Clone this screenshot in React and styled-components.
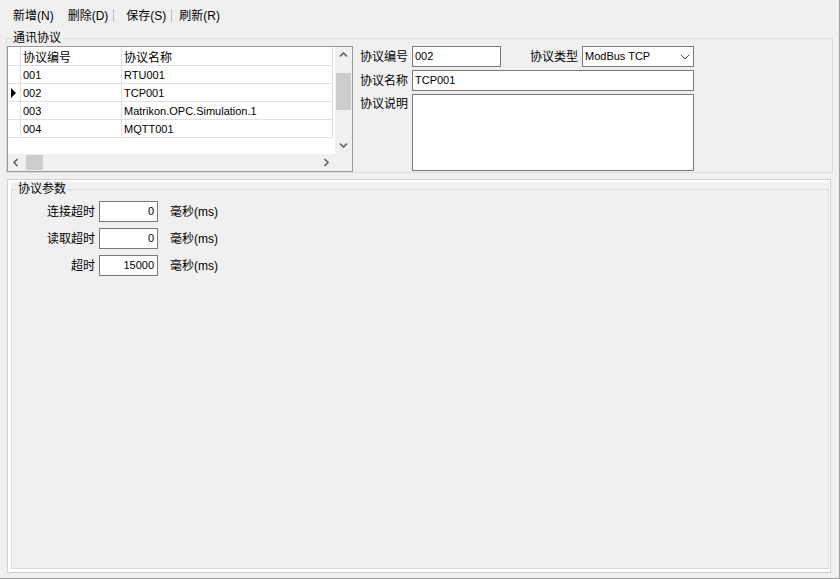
import React from 'react';
import styled, { createGlobalStyle } from 'styled-components';

const GlobalStyle = createGlobalStyle`
  html, body {
    margin: 0;
    padding: 0;
    background: #f0f0f0;
  }
  body {
    font-family: "Liberation Sans", "Noto Sans CJK SC", sans-serif;
    font-size: 12px;
    color: #000;
  }
`;

const Window = styled.div`
  box-sizing: border-box;
  width: 840px;
  height: 579px;
  background: #f0f0f0;
  border-right: 1px solid #a0a0a0;
  border-bottom: 1px solid #a0a0a0;
  overflow: hidden;
`;

const Toolbar = styled.div`
  display: flex;
  align-items: center;
  height: 31px;
  padding-left: 6px;
`;

const ToolButton = styled.div`
  padding: 0 7px;
  line-height: 16px;
  white-space: nowrap;
`;

const ToolSep = styled.div`
  width: 1px;
  height: 13px;
  background: #bcbcbc;
  margin: 0 ${(p) => p.$after || 0}px 0 -2px;
`;

const Group = styled.div`
  position: relative;
  box-sizing: border-box;
  border: 1px solid #dcdcdc;
`;

const Legend = styled.span`
  position: absolute;
  top: -9px;
  left: 5px;
  padding: 0 1px;
  background: #f0f0f0;
  line-height: 16px;
  white-space: nowrap;
`;

const TopGroup = styled(Group)`
  display: flex;
  align-items: flex-start;
  width: 827px;
  height: 135px;
  margin: 7px 0 0 6px;
  padding-top: 7px;
`;

const Grid = styled.div`
  box-sizing: border-box;
  width: 346px;
  height: 126px;
  border: 1px solid #999;
  background: #fff;
  display: flex;
  flex-direction: column;
`;

const GridBody = styled.div`
  display: flex;
  height: 107px;
`;

const Cells = styled.div`
  flex: 1;
  background: #fff;
`;

const Row = styled.div`
  display: grid;
  grid-template-columns: 13px 101px 211px;
  height: ${(p) => p.$h}px;
`;

const Cell = styled.div`
  box-sizing: border-box;
  display: flex;
  align-items: center;
  padding-left: 2px;
  border-right: 1px solid #e0e0e0;
  border-bottom: 1px solid #e0e0e0;
  font-size: ${(p) => (p.$head ? 12 : 11)}px;
  white-space: nowrap;
  overflow: hidden;
`;

const RowHead = styled(Cell)`
  padding-left: 3px;
`;

const Pointer = styled.span`
  width: 0;
  height: 0;
  border-left: 5px solid #000;
  border-top: 5px solid transparent;
  border-bottom: 5px solid transparent;
`;

const VScroll = styled.div`
  width: 17px;
  background: #f0f0f0;
  display: flex;
  flex-direction: column;
`;

const HScroll = styled.div`
  display: flex;
  height: 17px;
  background: #f0f0f0;
`;

const ArrowBox = styled.div`
  width: 17px;
  height: 17px;
  flex: none;
  display: flex;
  align-items: center;
  justify-content: center;
`;

const VThumb = styled.div`
  margin: 9px 1px 0;
  height: 37px;
  background: #cdcdcd;
`;

const HThumb = styled.div`
  margin: 1px 0 1px 1px;
  width: 17px;
  background: #cdcdcd;
`;

const Spacer = styled.div`
  flex: 1;
`;

const Form = styled.div`
  display: grid;
  grid-template-columns: 52px 89px 1fr 112px;
  grid-template-rows: 21px 21px 77px;
  row-gap: 3px;
  width: 334px;
  margin-left: 7px;
`;

const Label = styled.div`
  display: flex;
  align-items: ${(p) => (p.$top ? 'flex-start' : 'center')};
  justify-content: ${(p) => (p.$right ? 'flex-end' : 'flex-start')};
  padding-right: ${(p) => (p.$right ? 4 : 0)}px;
  line-height: ${(p) => (p.$top ? '21px' : '16px')};
  white-space: nowrap;
`;

const Field = styled.div`
  box-sizing: border-box;
  grid-column: ${(p) => p.$span || 'auto'};
  display: flex;
  align-items: ${(p) => (p.$multi ? 'flex-start' : 'center')};
  justify-content: ${(p) => (p.$right ? 'flex-end' : 'flex-start')};
  border: 1px solid #7a7a7a;
  background: #fff;
  padding: 0 ${(p) => (p.$right ? 3 : 2)}px;
  font-size: 11px;
  line-height: 19px;
  white-space: nowrap;
`;

const Select = styled(Field)`
  justify-content: space-between;
  padding-right: 3px;
`;

const BottomPanel = styled.div`
  box-sizing: border-box;
  display: flex;
  width: 824px;
  height: 394px;
  margin: 6px 0 0 7px;
  border: 1px solid #d0d0d0;
  background: #fff;
  padding: 2px 1px 3px 3px;
`;

const ParamGroup = styled.div`
  flex: 1;
  display: flex;
  background: #f0f0f0;
  padding-top: 7px;
`;

const ParamFrame = styled(Group)`
  flex: 1;
  padding-top: 11px;
`;

const ParamRow = styled.div`
  display: flex;
  align-items: center;
  height: 21px;
  margin-bottom: 6px;
`;

const ParamLabel = styled.div`
  box-sizing: border-box;
  width: 87px;
  padding-right: 4px;
  text-align: right;
  line-height: 16px;
`;

const NumField = styled(Field)`
  width: 59px;
  height: 21px;
`;

const Unit = styled.div`
  margin-left: 12px;
  line-height: 16px;
`;

const Chevron = ({ dir, color = '#606060' }) => {
  const paths = {
    up: 'M1 5.5 L4.5 2 L8 5.5',
    down: 'M1 2.5 L4.5 6 L8 2.5',
    left: 'M5.5 1 L2 4.5 L5.5 8',
    right: 'M2.5 1 L6 4.5 L2.5 8',
  };
  return (
    <svg width="9" height="9" viewBox="0 0 9 9">
      <path d={paths[dir]} fill="none" stroke={color} strokeWidth="1.6" />
    </svg>
  );
};

const DropArrow = () => (
  <svg width="10" height="6" viewBox="0 0 10 6">
    <path d="M0.5 0.5 L5 5 L9.5 0.5" fill="none" stroke="#505050" strokeWidth="1" />
  </svg>
);

const protocols = [
  { code: '001', name: 'RTU001' },
  { code: '002', name: 'TCP001', current: true },
  { code: '003', name: 'Matrikon.OPC.Simulation.1' },
  { code: '004', name: 'MQTT001' },
];

const params = [
  { label: '连接超时', value: '0' },
  { label: '读取超时', value: '0' },
  { label: '超时', value: '15000' },
];

export default function App() {
  return (
    <>
      <GlobalStyle />
      <Window>
        <Toolbar>
          <ToolButton>新增(N)</ToolButton>
          <ToolButton>删除(D)</ToolButton>
          <ToolSep $after={5} />
          <ToolButton>保存(S)</ToolButton>
          <ToolSep $after={0} />
          <ToolButton>刷新(R)</ToolButton>
        </Toolbar>

        <TopGroup>
          <Legend>通讯协议</Legend>
          <Grid>
            <GridBody>
              <Cells>
                <Row $h={19}>
                  <RowHead $head />
                  <Cell $head>协议编号</Cell>
                  <Cell $head>协议名称</Cell>
                </Row>
                {protocols.map((p) => (
                  <Row key={p.code} $h={18}>
                    <RowHead>{p.current && <Pointer />}</RowHead>
                    <Cell>{p.code}</Cell>
                    <Cell>{p.name}</Cell>
                  </Row>
                ))}
              </Cells>
              <VScroll>
                <ArrowBox>
                  <Chevron dir="up" />
                </ArrowBox>
                <VThumb />
                <Spacer />
                <ArrowBox>
                  <Chevron dir="down" />
                </ArrowBox>
              </VScroll>
            </GridBody>
            <HScroll>
              <ArrowBox>
                <Chevron dir="left" />
              </ArrowBox>
              <HThumb />
              <Spacer />
              <ArrowBox>
                <Chevron dir="right" />
              </ArrowBox>
              <ArrowBox />
            </HScroll>
          </Grid>

          <Form>
            <Label>协议编号</Label>
            <Field>002</Field>
            <Label $right>协议类型</Label>
            <Select>
              <span>ModBus TCP</span>
              <DropArrow />
            </Select>
            <Label>协议名称</Label>
            <Field $span="2 / 5">TCP001</Field>
            <Label $top>协议说明</Label>
            <Field $span="2 / 5" $multi />
          </Form>
        </TopGroup>

        <BottomPanel>
          <ParamGroup>
            <ParamFrame>
              <Legend>协议参数</Legend>
              {params.map((p) => (
                <ParamRow key={p.label}>
                  <ParamLabel>{p.label}</ParamLabel>
                  <NumField $right>{p.value}</NumField>
                  <Unit>毫秒(ms)</Unit>
                </ParamRow>
              ))}
            </ParamFrame>
          </ParamGroup>
        </BottomPanel>
      </Window>
    </>
  );
}
